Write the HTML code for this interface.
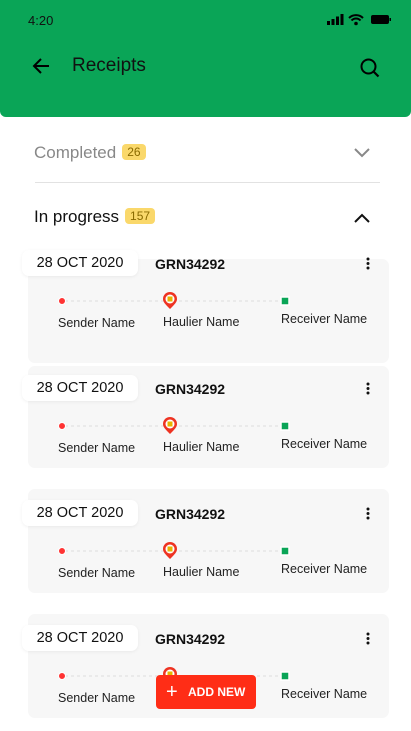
<!DOCTYPE html><html><head><style>
body{margin:0;width:411px;height:731px;position:relative;overflow:hidden;background:#fff;font-family:"Liberation Sans",sans-serif;}
.hdr{position:absolute;left:0;top:0;width:411px;height:117px;background:#0aa557;border-radius:0 0 6px 6px;}
.abs{position:absolute;}
.card{position:absolute;left:28px;width:361px;background:#f7f7f7;border-radius:7px;}
.pill{position:absolute;left:22px;width:116px;height:26px;background:#fff;border-radius:7px;box-shadow:0 1px 3px rgba(0,0,0,.06);font-size:14.5px;line-height:27px;text-align:center;color:#111;}
.grn{position:absolute;left:155px;font-size:14px;font-weight:bold;color:#111;}
.t{position:absolute;font-size:12.5px;color:#222;}
.badge{display:inline-block;background:#fad86b;color:#8a6a00;font-size:12px;border-radius:4px;padding:1px 5px;vertical-align:2px;margin-left:6px;}
</style></head><body>
<div class="hdr">
<div class="abs" style="left:28px;top:13px;font-size:13px;color:#111">4:20</div>
<svg class="abs" style="left:327px;top:13px" width="66" height="14"><rect x="0" y="8" width="3" height="4" fill="#000"/><rect x="4.5" y="6" width="3" height="6" fill="#000"/><rect x="9" y="3.5" width="3" height="8.5" fill="#000"/><rect x="13.5" y="1" width="3" height="11" fill="#000"/><path d="M22 5a10 10 0 0 1 14 0M24.5 7.5a6 6 0 0 1 9 0" stroke="#000" stroke-width="2" fill="none"/><circle cx="29" cy="10.5" r="1.8" fill="#000"/><rect x="44" y="2" width="18" height="9" rx="2" fill="#000"/><rect x="62.5" y="5" width="1.5" height="3" fill="#000"/></svg>
<svg class="abs" style="left:31px;top:57px" width="20" height="18"><path d="M18 9H3M10 2L3 9l7 7" stroke="#000" stroke-width="2" fill="none"/></svg>
<div class="abs" style="left:72px;top:55px;font-size:19px;color:#111">Receipts</div>
<svg class="abs" style="left:359px;top:57px" width="22" height="22"><circle cx="9.5" cy="9.5" r="7" stroke="#000" stroke-width="2" fill="none"/><path d="M14.5 14.5l5 5" stroke="#000" stroke-width="2.2"/></svg>
</div>
<div class="abs" style="left:34px;top:143px;font-size:17px;color:#888">Completed<span class="badge">26</span></div>
<svg class="abs" style="left:353px;top:147px" width="18" height="12"><path d="M2 2l7 7 7-7" stroke="#888" stroke-width="2" fill="none"/></svg>
<div class="abs" style="left:35px;top:182px;width:345px;height:1px;background:#e2e2e2"></div>
<div class="abs" style="left:34px;top:207px;font-size:17px;color:#111">In progress<span class="badge">157</span></div>
<svg class="abs" style="left:353px;top:212px" width="18" height="12"><path d="M2 10l7-7 7 7" stroke="#111" stroke-width="2" fill="none"/></svg>

<div class="card" style="top:259px;height:104px"></div>
<div class="card" style="top:366px;height:102px"></div>
<div class="card" style="top:489px;height:104px"></div>
<div class="card" style="top:614px;height:104px"></div>

<div id="c"></div>
<script>
var tops=[250,375,500,625],h='';
tops.forEach(function(p,i){
h+='<div class="pill" style="top:'+p+'px">28 OCT 2020</div>';
h+='<div class="grn" style="top:'+(p+6)+'px">GRN34292</div>';
h+='<svg class="abs" style="left:366px;top:'+(p+7)+'px" width="4" height="13"><circle cx="2" cy="2" r="1.5" fill="#111"/><circle cx="2" cy="6.5" r="1.5" fill="#111"/><circle cx="2" cy="11" r="1.5" fill="#111"/></svg>';
h+='<svg class="abs" style="left:55px;top:'+(p+40)+'px" width="240" height="20"><line x1="10" y1="11" x2="226" y2="11" stroke="#ddd" stroke-dasharray="3 3"/><circle cx="7" cy="11" r="3.5" fill="#f33" stroke="#fff" stroke-width="1"/><path d="M115 19c-5-5-7-7-7-10a7 7 0 0 1 14 0c0 3-2 5-7 10z" fill="#e32"/><circle cx="115" cy="9" r="4.5" fill="#fff"/><rect x="112.5" y="6.5" width="5" height="5" fill="#e8b400"/><rect x="226" y="7" width="8" height="8" fill="#0aa557" stroke="#fff" stroke-width="1.5"/></svg>';
h+='<div class="t" style="left:58px;top:'+(p+66)+'px">Sender Name</div>';
if(i<3)h+='<div class="t" style="left:163px;top:'+(p+65)+'px">Haulier Name</div>';
h+='<div class="t" style="left:281px;top:'+(p+62)+'px">Receiver Name</div>';
});
document.getElementById('c').innerHTML=h;
</script>
<div class="abs" style="left:156px;top:675px;width:100px;height:34px;background:#ff2d16;border-radius:4px;color:#fff;font-size:12px;font-weight:bold;line-height:34px;"><span style="position:absolute;left:10px;font-size:20px;font-weight:normal">+</span><span style="position:absolute;left:32px">ADD NEW</span></div>
</body></html>
